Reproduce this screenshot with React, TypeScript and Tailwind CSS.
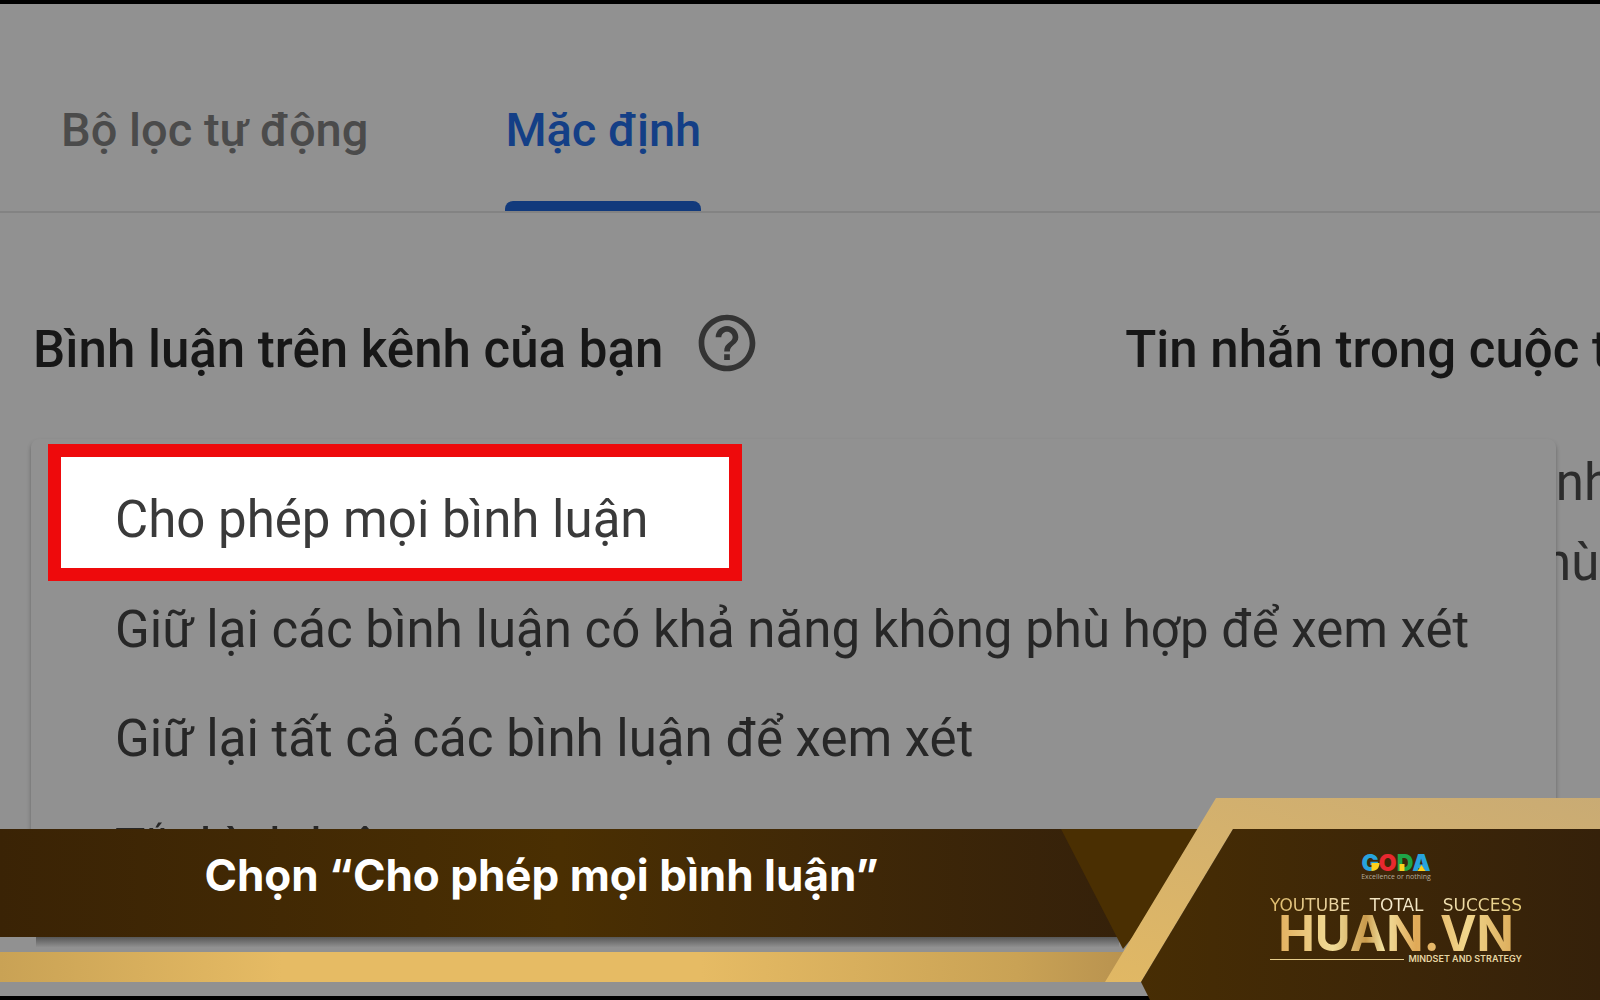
import React, { useState } from 'react';
import { MdHelpOutline } from 'react-icons/md';

const TABS = ['Bộ lọc tự động', 'Mặc định'];

const OPTIONS = [
  'Cho phép mọi bình luận',
  'Giữ lại các bình luận có khả năng không phù hợp để xem xét',
  'Giữ lại tất cả các bình luận để xem xét',
  'Tắt bình luận'
];

function GodaLogo() {
  return (
    <div className="flex flex-col items-center">
      <div className="relative font-['Inter',sans-serif] text-[23px] leading-5 font-black">
        <span className="text-[#27a3dd]">G</span>
        <span className="text-[#e8282f]">O</span>
        <span className="text-[#1fa548]">D</span>
        <span className="text-[#27a3dd]">A</span>
        {/* Yellow accents */}
        <svg className="absolute inset-0 h-full w-full" viewBox="0 0 68 20" aria-hidden="true">
          <path d="M9 10h8c0 5-3 8-8 8z" fill="#fdd01c" />
          <path d="M37 11h5v7h-5z" fill="#fdd01c" />
          <path d="M59 12l4 6h-8z" fill="#fdd01c" />
        </svg>
      </div>
      <div className="font-['Open_Sans',sans-serif] text-[7px] leading-2 text-[#b5ab9b]">Excellence or nothing</div>
    </div>
  );
}

function HuanLogo() {
  return (
    <div className="w-[252px] font-['Inter',sans-serif]">
      <div className="flex justify-between bg-gradient-to-r from-[#e0bd6c] via-[#f6ecd2] to-[#e6cb78] bg-clip-text font-['DejaVu_Sans',sans-serif] text-[17px] leading-4 text-transparent">
        <span>YOUTUBE</span>
        <span>TOTAL</span>
        <span>SUCCESS</span>
      </div>
      <div className="bg-[linear-gradient(to_right,#e0a957,#f1dc97_25%,#c99a4c_38%,#f3e2a0_45%,#e0a957_58%,#f1d68c_78%,#d9a552)] bg-clip-text text-center text-[49px] leading-[42px] font-bold text-transparent">
        HUAN.VN
      </div>
      <div className="flex items-center gap-1">
        <div className="h-px flex-1 bg-[#e6cd8c]" />
        <span className="text-[9px] leading-2 font-semibold text-[#e6d6a4]">MINDSET AND STRATEGY</span>
      </div>
    </div>
  );
}

function Banner() {
  return (
    <footer className="absolute inset-x-0 bottom-0 grid">
      {/* Caption bar and gold strip */}
      <div className="col-start-1 row-start-1 flex flex-col pt-[31px]">
        <div className="mr-[481px] bg-gradient-to-r from-[#3a2305] via-[#4a2f02] to-[#35210a]">
          <p className="mr-9 flex h-[108px] items-center justify-center pb-4 font-['Inter',sans-serif] text-[44px] leading-[48px] font-bold text-white">
            Chọn “Cho phép mọi bình luận”
          </p>
        </div>
        <div className="mr-[481px] ml-9 h-[15px] bg-gradient-to-b from-black/40 to-transparent to-70%" />
        <div className="mr-[470px] h-[30px] bg-[linear-gradient(to_right,#c9a255,#e6bb64_25%,#e6bb64_62%,#c9a255_90%,#b8924f)]" />
        <div className="mt-[14px] h-1 bg-black" />
      </div>
      {/* Angled badge */}
      <div className="col-start-1 row-start-1 grid h-[202px] w-[539px] justify-self-end">
        <div className="col-start-1 row-start-1 bg-[#4a2f02] [clip-path:polygon(0_31px,160px_31px,62px_151px)]" />
        <div className="col-start-1 row-start-1 bg-gradient-to-tr from-[#e3b962] to-[#c9ab74] [clip-path:polygon(155px_0,100%_0,100%_31px,172px_31px,80px_184px,44px_184px)]" />
        <div className="col-start-1 row-start-1 bg-gradient-to-r from-[#4a2f02] to-[#35210a] [clip-path:polygon(172px_31px,100%_31px,100%_100%,89px_100%,80px_184px)]" />
        <div className="relative col-start-1 row-start-1 flex flex-col items-end gap-4 pt-[55px] pr-[78px]">
          <div className="flex w-[252px] justify-center">
            <GodaLogo />
          </div>
          <HuanLogo />
        </div>
      </div>
    </footer>
  );
}

export default function App() {
  const [activeTab, setActiveTab] = useState(1);
  const [selected, setSelected] = useState(0);

  return (
    <div className="relative min-h-screen overflow-hidden border-t-4 border-black bg-[#919191] font-['Roboto',sans-serif]">
      <nav role="tablist" className="flex gap-[137px] border-b-2 border-[#838383] px-[61px] pt-[94px]">
        {TABS.map((tab, index) => (
          <button
            key={tab}
            role="tab"
            aria-selected={activeTab === index}
            onClick={() => setActiveTab(index)}
            className={`text-[47px] leading-[64px] font-medium ${activeTab === index ? 'text-[#143f86]' : 'text-[#4b4b4b]'}`}
          >
            {tab}
            <span className={`mt-[39px] block h-[10px] rounded-t-lg ${activeTab === index ? 'bg-[#123a7c]' : ''}`} />
          </button>
        ))}
      </nav>

      <main className="relative">
        <div className="grid grid-cols-[23fr_10fr] pt-24 pl-[33px] text-[#171717]">
          <div className="flex items-start gap-[30px]">
            <h2 className="pt-[11px] text-[51px] leading-[60px] font-medium">Bình luận trên kênh của bạn</h2>
            <button aria-label="Trợ giúp" className="text-[#343434]">
              <MdHelpOutline size={68} />
            </button>
          </div>
          <div className="min-w-0 whitespace-nowrap">
            <h2 className="pt-[11px] text-[51px] leading-[60px] font-medium">Tin nhắn trong cuộc trò chuyện</h2>
            <p className="-mr-3 pt-[63px] text-right text-[51px] leading-[80px] text-[#2c2c2c]">
              nh
              <br />
              phù&nbsp;
            </p>
          </div>
        </div>

        {/* Comment setting menu */}
        <ul
          role="listbox"
          className="absolute top-[226px] right-[44px] left-[31px] rounded-lg bg-[#919191] pt-[5px] text-[51px] text-[#272727] shadow-[0_3px_4px_rgba(0,0,0,0.3)]"
        >
          {OPTIONS.map((option, index) => (
            <li key={option} role="option" aria-selected={selected === index} className={selected === index ? 'h-[132px] pl-[17px]' : 'h-[109px] pl-[84px]'}>
              <button
                onClick={() => setSelected(index)}
                className={
                  selected === index
                    ? 'h-[137px] border-[13px] border-[#ee0a0c] bg-white pt-4 pr-20 pl-[54px] text-[#3a3a3a]'
                    : 'h-[109px]'
                }
              >
                {option}
              </button>
            </li>
          ))}
        </ul>
      </main>

      <Banner />
    </div>
  );
}
